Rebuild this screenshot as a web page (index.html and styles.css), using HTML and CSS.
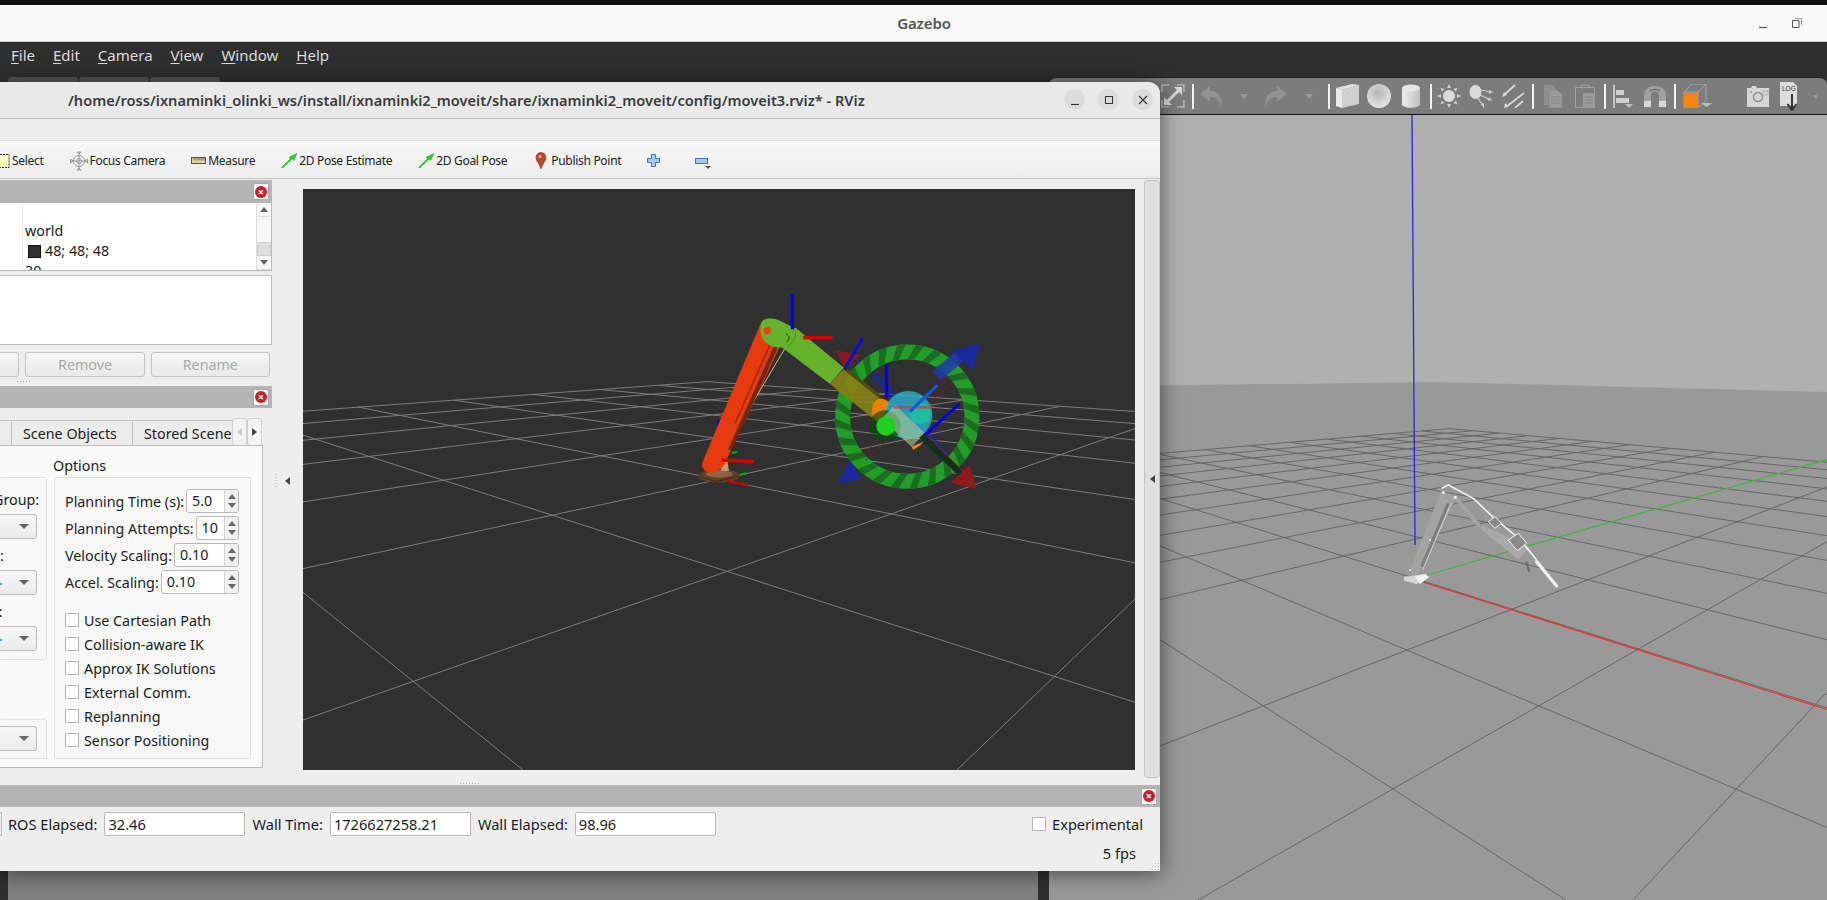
FILE: index.html
```html
<!DOCTYPE html>
<html lang="en">
<head>
<meta charset="utf-8">
<title>Gazebo and RViz</title>
<link rel="stylesheet" href="styles.css">
</head>
<body>
<div class="screen">
  <div class="topstrip"></div>
  <header class="gz-title">
    <span></span>
    <span class="gz-name">Gazebo</span>
    <div class="gz-ctrls">
      <svg width="12" height="12" viewBox="0 0 12 12"><path d="M2 10.500H10" stroke="#555" stroke-width="1.200"/></svg>
      <svg width="12" height="12" viewBox="0 0 12 12"><path d="M1.500 3.500H8V10.500H1.500Z" fill="none" stroke="#555"/><path d="M4 1.500H10.500V8" fill="none" stroke="#999"/></svg>
    </div>
  </header>
  <nav class="gz-menu">
    <span><u>F</u>ile</span><span><u>E</u>dit</span><span><u>C</u>amera</span><span><u>V</u>iew</span><span><u>W</u>indow</span><span><u>H</u>elp</span>
  </nav>
  <div class="gz-body">
    <aside class="gz-left">
      <div class="gz-tabs"><span class="gz-tab"></span><span class="gz-tab"></span><span class="gz-tab"></span></div>
      <div class="gz-left-panel"></div>
    </aside>
    <main class="gz-right">
      <div class="gz-toolbar">
        <span class="tb"><svg width="24" height="24" viewBox="0 0 24 24"><path d="M8 1H1V8M1 16V23H8M16 23H23V16M23 8V1H16" fill="none" stroke="#c9c9c9" stroke-width="1.200"/><path d="M6 18L18 6" stroke="#d8d8d8" stroke-width="3"/><path d="M13 3H21V11ZM3 13V21H11Z" fill="#d8d8d8"/></svg></span>
        <i class="sep"></i>
        <span class="tb"><svg width="24" height="24" viewBox="0 0 24 24"><path d="M1 10L11 2V7C19 7 24 13 22 23C20 16 17 13 11 13V18Z" fill="#929292"/></svg></span>
        <span class="tb tb-drop"><i class="drop"></i></span>
        <span class="tb"><svg width="24" height="24" viewBox="0 0 24 24"><path d="M23 10L13 2V7C5 7 0 13 2 23C4 16 7 13 13 13V18Z" fill="#929292"/></svg></span>
        <span class="tb tb-drop"><i class="drop"></i></span>
        <i class="sep"></i>
        <span class="tb"><svg width="24" height="24" viewBox="0 0 24 24"><path d="M1 4L7 6V24L1 22Z" fill="#ebebeb"/><path d="M7 6L24 1V20L7 24Z" fill="#cfcfcf"/><path d="M1 4L17 0L24 1L7 6Z" fill="#e2e2e2"/></svg></span>
        <span class="tb"><svg width="24" height="24" viewBox="0 0 24 24"><defs><radialGradient id="sph" cx=".45" cy=".35" r=".7"><stop offset="0" stop-color="#b6b6b6"/><stop offset=".6" stop-color="#d4d4d4"/><stop offset="1" stop-color="#e8e8e8"/></radialGradient></defs><ellipse cx="12" cy="12" rx="12" ry="12" fill="url(#sph)"/></svg></span>
        <span class="tb"><svg width="20" height="24" viewBox="0 0 20 24"><defs><linearGradient id="cyl"><stop offset="0" stop-color="#ececec"/><stop offset=".5" stop-color="#d8d8d8"/><stop offset="1" stop-color="#bdbdbd"/></linearGradient></defs><path d="M1 4V20C1 25 19 25 19 20V4Z" fill="url(#cyl)"/><ellipse cx="10" cy="4" rx="9" ry="3.500" fill="#e6e6e6"/></svg></span>
        <i class="sep"></i>
        <span class="tb"><svg width="24" height="24" viewBox="0 0 24 24"><circle cx="12" cy="12" r="6" fill="#dcdcdc"/><g fill="#cfcfcf"><path d="M12 0L14 4H10ZM12 24L10 20H14ZM0 12L4 10V14ZM24 12L20 14V10ZM3.500 3.500L7.500 5L5 7.500ZM20.500 20.500L16.500 19L19 16.500ZM20.500 3.500L19 7.500L16.500 5ZM3.500 20.500L5 16.500L7.500 19Z"/></g></svg></span>
        <span class="tb"><svg width="24" height="24" viewBox="0 0 24 24"><ellipse cx="6.500" cy="8" rx="6" ry="7" fill="#dadada"/><g stroke="#cfcfcf" stroke-width="1.200" fill="#cfcfcf"><path d="M12 6L21 8M11 11L20 15M9 14L14 22"/></g><path d="M24 8L20 10V6ZM23 17L18 16L20.500 13ZM15 24L12 20L15 19Z" fill="#cfcfcf"/></svg></span>
        <span class="tb"><svg width="24" height="24" viewBox="0 0 24 24"><g stroke="#d8d8d8" stroke-width="1.800"><path d="M14 1L3 11M23 9L5 23M22 17L14 24"/></g><path d="M1 13L3 8L6 11ZM3 24L4 19L8 22Z" fill="#d8d8d8"/></svg></span>
        <i class="sep"></i>
        <span class="tb tb-copy"><svg width="20" height="24" viewBox="0 0 20 24"><path d="M1 1H9L13 5V21H1Z" fill="#8f8f8f"/><path d="M6 6H14L19 10V24H6Z" fill="#9b9b9b" stroke="#868686" stroke-width=".6"/><path d="M8 13H17M8 16H17M8 19H17" stroke="#858585"/></svg></span>
        <span class="tb"><svg width="22" height="24" viewBox="0 0 22 24"><path d="M1.500 3.500H20.500V23.500H1.500Z" fill="none" stroke="#a2a2a2"/><path d="M7 3V1H15V3" fill="none" stroke="#a2a2a2"/><path d="M9 9H21V24H9Z" fill="#9b9b9b"/><path d="M11 13H19M11 16H19M11 19H19" stroke="#858585"/></svg></span>
        <i class="sep"></i>
        <span class="tb"><svg width="20" height="24" viewBox="0 0 20 24"><path d="M1 1V24" stroke="#d8d8d8" stroke-width="1.600"/><path d="M3 6H11V11H3ZM3 14H16V19H3Z" fill="#d0d0d0"/><path d="M12 20H20L16 24Z" fill="#bdbdbd"/></svg></span>
        <span class="tb"><svg width="24" height="24" viewBox="0 0 24 24"><path d="M1 23V11C1 -1 23 -1 23 11V23H16V11C16 6 8 6 8 11V23Z" fill="#a0a0a0"/><path d="M1 23V17H8V23ZM16 23V17H23V23Z" fill="#d8d8d8"/><path d="M7 7C9 5 15 5 17 7" stroke="#444" fill="none" stroke-width=".8"/></svg></span>
        <i class="sep"></i>
        <span class="tb tb-cube"><svg width="30" height="24" viewBox="0 0 30 24"><path d="M1 8H15V24H1ZM1 8L9 0H23L15 8M23 0V16L15 24" fill="none" stroke="#a6a6a6"/><rect x="1" y="9" width="14" height="15" fill="#f5850f"/><path d="M19 19H30L24.500 23Z" fill="#bdbdbd" transform="translate(-1 0)"/></svg></span>
        <span class="tb tb-cam"><svg width="24" height="24" viewBox="0 0 24 24"><path d="M1 4H5L6 2H10L11 4H23V23H1Z" fill="#d6d6d6"/><circle cx="12" cy="13" r="4.500" fill="none" stroke="#8c8c8c" stroke-width="1.400"/><path d="M17 7H22V11H17Z" fill="none" stroke="#b5b5b5"/><circle cx="5" cy="8" r="1" fill="#999"/></svg></span>
        <span class="tb"><svg width="22" height="30" viewBox="0 0 22 30"><path d="M1 1H14L18 5V25H1Z" fill="#dcdcdc"/><text x="3" y="10" class="log-text">LOG</text><path d="M13 13V27M8.500 23L13 29L17.500 23" fill="none" stroke="#333" stroke-width="2"/></svg></span>
        <i class="tb-dot"></i>
      </div>
      <svg class="gz-view" width="778" height="785" viewBox="1049 115 778 785">
        <rect x="1049" y="115" width="778" height="785" fill="#b0b0b0"/>
        <path d="M1049 387L1434 382L1827 392V900H1049Z" fill="#999"/>
        <g class="gz-grid">
          <line x1="903" y1="475" x2="1566" y2="900"/><line x1="978" y1="469" x2="1827" y2="827.500"/><line x1="1044" y1="462" x2="1827" y2="708"/><line x1="1103" y1="458.300" x2="1827" y2="639.700"/><line x1="1157" y1="453.800" x2="1827" y2="593.300"/><line x1="1206" y1="449.600" x2="1827" y2="560.400"/><line x1="1250" y1="445.800" x2="1827" y2="535.700"/><line x1="1290" y1="442.300" x2="1827" y2="516.600"/><line x1="1327" y1="439.100" x2="1827" y2="501.300"/><line x1="1361" y1="436.200" x2="1827" y2="488.800"/><line x1="1393" y1="433.500" x2="1827" y2="478.500"/><line x1="1422" y1="431" x2="1827" y2="469.700"/><line x1="1449" y1="428.600" x2="1827" y2="462.200"/>
          <line x1="1827" y1="692" x2="1633" y2="900"/><line x1="1827" y1="541.600" x2="1198" y2="900"/><line x1="1827" y1="486.900" x2="1049" y2="789"/><line x1="1763" y1="456.600" x2="1049" y2="626"/><line x1="1714" y1="452.300" x2="1049" y2="584.300"/><line x1="1670" y1="448.300" x2="1049" y2="554.300"/><line x1="1629" y1="444.700" x2="1049" y2="531.700"/><line x1="1592" y1="441.500" x2="1049" y2="514"/><line x1="1558" y1="438.500" x2="1049" y2="499.800"/><line x1="1527" y1="435.800" x2="1049" y2="488.100"/><line x1="1499" y1="433.200" x2="1049" y2="478.400"/><line x1="1473" y1="430.800" x2="1049" y2="470.100"/><line x1="1449" y1="428.600" x2="1049" y2="463"/>
        </g>
        <line x1="1412" y1="115" x2="1415" y2="545" stroke="#2626e0" stroke-width="1.300"/>
        <line x1="1427" y1="575" x2="1827" y2="459.600" stroke="#3fb53f" stroke-width="1.200"/>
        <line x1="1423" y1="582" x2="1827" y2="709.600" stroke="#ff2222" stroke-width="1.100"/>
        <g transform="translate(1380 460) scale(.3333)">
          <path d="M88 335L185 90L228 115L112 348Z" fill="#a3a3a3"/>
          <path d="M205 130L125 320" stroke="#7d7d7d" stroke-width="9"/>
          <path d="M214 128L128 330" stroke="#cfcfcf" stroke-width="3"/>
          <path d="M305 195L450 262L415 298L305 210Z" fill="#a9a9a9"/>
          <path d="M228 115L300 200" stroke="#a3a3a3" stroke-width="12"/>
          <path d="M185 85L205 75L280 115L340 172L420 238L470 300" fill="none" stroke="#f0f0f0" stroke-width="5"/>
          <path d="M325 185L345 170L365 190L345 205ZM385 240L415 220L440 250L412 272Z" fill="#8a8a8a" stroke="#f0f0f0" stroke-width="3"/>
          <path d="M470 305L530 378" stroke="#f0f0f0" stroke-width="10" stroke-linecap="round"/>
          <path d="M438 305L448 335" stroke="#666" stroke-width="6"/>
          <path d="M72 350L135 342L147 352L110 372L72 362Z" fill="#d4d4d4"/>
          <path d="M105 350L135 342L147 352L120 372Z" fill="#f2f2f2"/>
          <circle cx="226" cy="112" r="5" fill="#eee"/><circle cx="190" cy="98" r="4" fill="#eee"/><circle cx="150" cy="240" r="3" fill="#eee"/><circle cx="90" cy="330" r="3" fill="#eee"/>
        </g>
      </svg>
    </main>
  </div>

  <section class="rviz">
    <header class="rv-title">
      <span class="rv-name">/home/ross/ixnaminki_olinki_ws/install/ixnaminki2_moveit/share/ixnaminki2_moveit/config/moveit3.rviz* - RViz</span>
      <div class="rv-ctrls">
        <span class="rv-ctrl"><svg width="12" height="12" viewBox="0 0 12 12"><path d="M2 10.500H10" stroke="#333" stroke-width="1.200"/></svg></span>
        <span class="rv-ctrl"><svg width="12" height="12" viewBox="0 0 12 12"><rect x="2.500" y="2.500" width="7" height="7" fill="none" stroke="#333"/></svg></span>
        <span class="rv-ctrl"><svg width="12" height="12" viewBox="0 0 12 12"><path d="M2 2L10 10M10 2L2 10" stroke="#333" stroke-width="1.100"/></svg></span>
      </div>
    </header>
    <div class="rv-menu"></div>
    <div class="rv-tools">
      <span class="tool tool-select"><svg width="10" height="14" viewBox="0 0 10 14"><rect x="-6" y=".5" width="15" height="13" fill="#ffffc4" stroke="#333" stroke-dasharray="2 1"/></svg>Select</span>
      <span class="tool"><svg width="18" height="20" viewBox="0 0 18 20"><g fill="none" stroke="#9a9a9a"><circle cx="9" cy="10" r="5.500"/><path d="M9 1V19M0.500 10H17.500M3 10L0.500 8V12ZM15 10L17.500 8V12ZM9 3L7 1H11ZM9 17L7 19H11Z"/><circle cx="9" cy="10" r="2.500"/></g></svg>Focus Camera</span>
      <span class="tool"><svg width="15" height="7" viewBox="0 0 15 7"><rect x=".5" y=".5" width="14" height="6" fill="#e0d4a8" stroke="#555"/><path d="M3 1V3.500M5 1V3.500M7 1V3.500M9 1V3.500M11 1V3.500M13 1V3.500" stroke="#7c6b3c"/></svg>Measure</span>
      <span class="tool tool-arrow"><svg width="16" height="15" viewBox="0 0 16 15"><path d="M0.500 14.500L9.500 5.500L8 4.200L16 .5L12.800 7.500L11.200 6L1.800 15Z" fill="#14e014" stroke="#0a600a" stroke-width=".3"/></svg>2D Pose Estimate</span>
      <span class="tool tool-arrow"><svg width="16" height="15" viewBox="0 0 16 15"><path d="M0.500 14.500L9.500 5.500L8 4.200L16 .5L12.800 7.500L11.200 6L1.800 15Z" fill="#14e014" stroke="#0a600a" stroke-width=".3"/></svg>2D Goal Pose</span>
      <span class="tool tool-pin"><svg width="12" height="17" viewBox="0 0 12 17"><path d="M6 17C4 11 1 9 1 5.500C1 2.500 3 .5 6 .5C9 .5 11 2.500 11 5.500C11 9 8 11 6 17Z" fill="#b6492c" stroke="#7c3a20" stroke-width=".5"/><circle cx="5" cy="4.500" r="1.500" fill="#e9a98c"/></svg>Publish Point</span>
      <span class="tool tool-plus"><svg width="13" height="13" viewBox="0 0 13 13"><path d="M4.500 .5H8.500V4.500H12.500V8.500H8.500V12.500H4.500V8.500H.5V4.500H4.500Z" fill="#a9c8ea" stroke="#3f74b5"/></svg></span>
      <span class="tool tool-minus"><svg width="13" height="6" viewBox="0 0 13 6"><rect x=".5" y=".5" width="12" height="5" fill="#a9c8ea" stroke="#3f74b5"/></svg><i class="drop drop-small"></i></span>
    </div>

    <div class="rv-main">
      <div class="dock">
        <div class="dock-head"><span class="close"><i>×</i></span></div>
        <div class="tree">
          <div class="tree-rows">
            <div class="tree-row"></div>
            <div class="tree-row">world</div>
            <div class="tree-row"><i class="swatch"></i>48; 48; 48</div>
            <div class="tree-row">30</div>
          </div>
          <div class="vscroll">
            <span class="vs-btn"><i class="arrow-up"></i></span>
            <span class="vs-track"><i class="vs-thumb"></i></span>
            <span class="vs-btn"><i class="arrow-down"></i></span>
          </div>
        </div>
        <div class="views-box"></div>
        <div class="view-btns">
          <span class="btn btn-clip"></span>
          <span class="btn">Remove</span>
          <span class="btn">Rename</span>
        </div>
        <div class="dots dots-dock"></div>
        <div class="dock-head dock-head-2"><span class="close"><i>×</i></span></div>
        <div class="tabs">
          <span class="tab tab-clip"></span>
          <span class="tab tab-scene">Scene Objects</span>
          <span class="tab tab-stored"><span>Stored Scenes</span></span>
          <span class="tab-scroll"><i class="arrow-left faint"></i></span>
          <span class="tab-scroll"><i class="arrow-right"></i></span>
        </div>
        <div class="pane">
          <div class="pane-left">
            <div class="group group-a">
              <div class="clip-label">Planning Group:</div>
              <div class="combo"><i class="arrow-down"></i></div>
              <div class="clip-label">Start State:</div>
              <div class="combo"><b class="blue-tick"></b><i class="arrow-down"></i></div>
              <div class="clip-label">Goal State:</div>
              <div class="combo"><b class="blue-tick"></b><i class="arrow-down"></i></div>
            </div>
            <div class="group group-b">
              <div class="combo"><i class="arrow-down"></i></div>
            </div>
          </div>
          <div class="pane-right">
            <div class="options-title">Options</div>
            <div class="group group-opts">
              <div class="spin-row"><span>Planning Time (s):</span><span class="spin"><span class="spin-val">5.0</span><span class="spin-btns"><i class="arrow-up"></i><i class="arrow-down"></i></span></span></div>
              <div class="spin-row"><span>Planning Attempts:</span><span class="spin"><span class="spin-val">10</span><span class="spin-btns"><i class="arrow-up"></i><i class="arrow-down"></i></span></span></div>
              <div class="spin-row"><span>Velocity Scaling:</span><span class="spin"><span class="spin-val">0.10</span><span class="spin-btns"><i class="arrow-up"></i><i class="arrow-down"></i></span></span></div>
              <div class="spin-row"><span>Accel. Scaling:</span><span class="spin"><span class="spin-val">0.10</span><span class="spin-btns"><i class="arrow-up"></i><i class="arrow-down"></i></span></span></div>
              <div class="checks">
                <div class="check"><i class="box"></i>Use Cartesian Path</div>
                <div class="check"><i class="box"></i>Collision-aware IK</div>
                <div class="check"><i class="box"></i>Approx IK Solutions</div>
                <div class="check"><i class="box"></i>External Comm.</div>
                <div class="check"><i class="box"></i>Replanning</div>
                <div class="check"><i class="box"></i>Sensor Positioning</div>
              </div>
            </div>
          </div>
        </div>
      </div>
      <div class="collapse"><i class="dots-v"></i><i class="arrow-left"></i></div>
      <svg class="scene" width="832" height="581" viewBox="303 189 832 581">
        <rect x="303" y="189" width="832" height="581" fill="#303030"/>
        <g class="rv-grid">
          <line x1="97" y1="426" x2="523" y2="770"/><line x1="242" y1="415.600" x2="1135" y2="702.300"/><line x1="358" y1="407" x2="1135" y2="562.800"/><line x1="454" y1="400.200" x2="1135" y2="499.500"/><line x1="532" y1="394.300" x2="1135" y2="463.300"/><line x1="600" y1="389.500" x2="1135" y2="440"/><line x1="658" y1="385.400" x2="1135" y2="423.600"/><line x1="707" y1="381.700" x2="1135" y2="411.500"/>
          <line x1="1135" y1="599" x2="957" y2="770"/><line x1="1135" y1="428.500" x2="303" y2="720"/><line x1="1060" y1="406.300" x2="303" y2="568.600"/><line x1="965" y1="399.700" x2="303" y2="501.900"/><line x1="885" y1="394.100" x2="303" y2="464.400"/><line x1="816" y1="389.400" x2="303" y2="440.300"/><line x1="758" y1="385.300" x2="303" y2="423.500"/><line x1="707" y1="381.700" x2="303" y2="411.200"/>
        </g>
        <g transform="translate(680 290) scale(.3333)">
          <path d="M115 388V405" stroke="#0000d8" stroke-width="7"/>
          <ellipse cx="118" cy="558" rx="62" ry="20" fill="#5f3f28"/>
          <ellipse cx="118" cy="552" rx="40" ry="11" fill="#8f6440"/>
          <path d="M60 560L110 575L178 558" fill="none" stroke="#3d2a1a" stroke-width="3"/>
          <path d="M125 515H143L147 543H122Z" fill="#c49a64"/>
          <path d="M118 510L125 545" stroke="#d040d0" stroke-width="2"/>
          <circle class="ring-base" cx="682" cy="380" r="194"/>
          <g class="ring-stripes">
            <path id="st" d="M854 380L852.900 399.500L893 430.600L897.400 406.500Z"/>
            <use href="#st" transform="rotate(15 682 380)"/><use href="#st" transform="rotate(30 682 380)"/><use href="#st" transform="rotate(45 682 380)"/><use href="#st" transform="rotate(60 682 380)"/><use href="#st" transform="rotate(75 682 380)"/><use href="#st" transform="rotate(90 682 380)"/><use href="#st" transform="rotate(105 682 380)"/><use href="#st" transform="rotate(120 682 380)"/><use href="#st" transform="rotate(135 682 380)"/><use href="#st" transform="rotate(150 682 380)"/><use href="#st" transform="rotate(165 682 380)"/><use href="#st" transform="rotate(180 682 380)"/><use href="#st" transform="rotate(195 682 380)"/><use href="#st" transform="rotate(210 682 380)"/><use href="#st" transform="rotate(225 682 380)"/><use href="#st" transform="rotate(240 682 380)"/><use href="#st" transform="rotate(255 682 380)"/><use href="#st" transform="rotate(270 682 380)"/><use href="#st" transform="rotate(285 682 380)"/><use href="#st" transform="rotate(300 682 380)"/><use href="#st" transform="rotate(315 682 380)"/><use href="#st" transform="rotate(330 682 380)"/><use href="#st" transform="rotate(345 682 380)"/>
          </g>
          <path d="M315 175L198 372" stroke="#c8c468" stroke-width="3"/>
          <path d="M240 105L68 515C62 535 75 548 92 548C110 548 125 535 132 525L302 165L262 85Z" fill="#e63a10"/>
          <path d="M288 170L150 480" stroke="#6e2a10" stroke-width="12"/>
          <path d="M270 165L165 400" stroke="#a52c0c" stroke-width="5"/>
          <path d="M250 90C265 82 285 85 300 92L345 115L490 235L450 282L305 172C285 175 262 165 250 150C238 130 238 100 250 90Z" fill="#64b32a"/>
          <path d="M345 115L490 235" stroke="#7ba83c" stroke-width="5"/>
          <path d="M345 118C350 140 340 160 322 170" fill="none" stroke="#2f6e12" stroke-width="1.500"/>
          <path d="M318 132C330 138 330 148 320 155" fill="none" stroke="#1d3a0c" stroke-width="3"/>
          <circle cx="262" cy="122" r="11" fill="#e9420f"/>
          <path d="M337 12V118" stroke="#0000ee" stroke-width="10"/>
          <path d="M370 143H458" stroke="#dd0000" stroke-width="11"/>
          <path d="M490 238L450 282L600 402L625 345Z" fill="#8a8216" opacity=".9"/>
          <path d="M500 240L600 320" stroke="#4e4e14" stroke-width="10"/>
          <path d="M465 180L540 195L495 235Z" fill="#8a1a1a"/>
          <path d="M548 145L495 235" stroke="#0a0ae0" stroke-width="9"/>
          <path d="M580 250L800 500" stroke="#1a2a9a" stroke-width="22" opacity=".7"/>
          <path d="M540 500L805 262M555 512L820 274" stroke="#9a1414" stroke-width="2.500"/>
          <path d="M770 258L850 188" stroke="#1e3cb0" stroke-width="38" opacity=".8"/>
          <path d="M815 182L898 160L880 240Z" fill="#1a2a9c"/>
          <path d="M510 510L472 580L545 568Z" fill="#1a2a9c"/>
          <path d="M578 345C590 320 615 322 628 340L600 402L575 370Z" fill="#ee8000"/>
          <circle cx="685" cy="375" r="72" fill="#27b8cc" opacity=".78"/>
          <circle cx="720" cy="370" r="32" fill="#16d89a" opacity=".55"/>
          <circle cx="615" cy="408" r="47" fill="#0c4a0c" opacity=".65"/>
          <path d="M625 365L715 450" stroke="#a8cc98" stroke-width="58" opacity=".6"/>
          <circle cx="618" cy="408" r="29" fill="#1fd01f"/>
          <path d="M640 352H760" stroke="#d83030" stroke-width="9" opacity=".6"/>
          <path d="M620 220V325" stroke="#0000ee" stroke-width="10"/>
          <path d="M772 285L690 365" stroke="#0a5ae8" stroke-width="9"/>
          <path d="M838 342L735 435" stroke="#0000ee" stroke-width="9"/>
          <path d="M695 470L730 455L722 465L700 480Z" fill="#f08a10"/>
          <path d="M725 437L848 555" stroke="#14301c" stroke-width="20"/>
          <path d="M745 440L850 545" stroke="#e01818" stroke-width="2"/>
          <path d="M868 525L890 598L812 578Z" fill="#8f1a1a"/>
          <path d="M125 510L222 515" stroke="#e00000" stroke-width="9"/>
          <path d="M155 490L172 485M178 555L198 550" stroke="#00b000" stroke-width="6"/>
          <path d="M140 572L205 587" stroke="#d00000" stroke-width="7"/>
        </g>
      </svg>
      <div class="right-handle"><i class="arrow-left"></i></div>
    </div>
    <div class="dots dots-status"></div>
    <div class="status-head"><span class="close"><i>×</i></span></div>
    <div class="status">
      <div class="status-row">
        <span class="field field-clip"></span>
        <span class="status-label">ROS Elapsed:</span>
        <span class="field">32.46</span>
        <span class="status-label">Wall Time:</span>
        <span class="field">1726627258.21</span>
        <span class="status-label">Wall Elapsed:</span>
        <span class="field">98.96</span>
        <span class="status-spacer"></span>
        <i class="box"></i>
        <span class="status-exp">Experimental</span>
      </div>
      <div class="fps-row"><span>5 fps</span><svg class="grip" width="12" height="12" viewBox="0 0 12 12"><g fill="#bdbdbd"><rect x="10" y="0" width="1" height="1"/><rect x="7" y="3" width="1" height="1"/><rect x="10" y="3" width="1" height="1"/><rect x="4" y="6" width="1" height="1"/><rect x="7" y="6" width="1" height="1"/><rect x="10" y="6" width="1" height="1"/><rect x="1" y="9" width="1" height="1"/><rect x="4" y="9" width="1" height="1"/><rect x="7" y="9" width="1" height="1"/><rect x="10" y="9" width="1" height="1"/></g></svg></div>
    </div>
  </section>
</div>
</body>
</html>
```
FILE: styles.css
```css
* { box-sizing: border-box; }
html, body { margin: 0; padding: 0; }
body { width: 1827px; height: 900px; overflow: hidden; background: #2f2f2f; font-family: "Noto Sans", "Open Sans", sans-serif; color: #1c1c1c; }
i { display: block; font-style: normal; }
svg { display: block; flex: none; }

.screen { position: relative; width: 1827px; height: 900px; overflow: hidden; display: flex; flex-direction: column; }
.topstrip { height: 5px; background: #111; flex: none; }

.gz-title { height: 37px; flex: none; background: #fafafa; border-bottom: 1px solid #cfcfcf; display: grid; grid-template-columns: 1fr auto 1fr; align-items: center; }
.gz-name { font-size: 15px; font-weight: 600; color: #555; letter-spacing: -.1px; margin-left: 21px; }
.gz-ctrls { display: flex; gap: 22px; justify-content: flex-end; padding-right: 24px; }

.gz-menu { height: 35px; flex: none; background: #2f2f2f; color: #dcdcdc; font-size: 15px; display: flex; align-items: center; gap: 18px; padding: 0 0 9px 11px; }
.gz-menu u { text-underline-offset: 2px; }

.gz-body { flex: 1; display: flex; gap: 11px; min-height: 0; background: #2f2f2f; }
.gz-left { width: 1038px; flex: none; display: flex; flex-direction: column; padding-left: 8px; }
.gz-tabs { height: 5px; display: flex; gap: 1px; flex: none; }
.gz-tab { width: 70px; background: #555; border-radius: 3px 3px 0 0; }
.gz-left-panel { flex: 1; background: #808080; }
.gz-right { flex: 1; display: flex; flex-direction: column; min-width: 0; }
.gz-toolbar { height: 38px; flex: none; display: flex; align-items: center; padding-left: 108px; background: #7c7c7c; border-bottom: 1px solid #111; border-top: 1px solid #222; border-radius: 7px 7px 0 0; }
.tb { width: 32px; height: 28px; flex: none; display: flex; align-items: center; justify-content: center; }
.tb-drop { width: 33px; }
.tb-copy { margin-left: 2px; }
.tb-cube { margin-left: 5px; }
.tb-cam { margin-left: 28px; }
.tb-dot { width: 3px; height: 3px; background: #9a9a9a; margin-left: 8px; }
.sep { width: 2px; height: 25px; background: #f2f2f2; margin: 0 1px 0 3px; flex: none; }
.drop { width: 0; height: 0; border-left: 4px solid transparent; border-right: 4px solid transparent; border-top: 5px solid #9b9b9b; }
.log-text { font-family: "Liberation Sans", sans-serif; font-size: 6.500px; fill: #333; }
.gz-view { flex: 1; }
.gz-grid line { stroke: #676767; stroke-width: 1; }

.rviz { position: absolute; left: 0; top: 82px; width: 1160px; height: 789px; display: flex; flex-direction: column; background: #eeeeee; border-radius: 0 12px 0 0; box-shadow: 0 2px 22px rgba(0, 0, 0, .55); }
.rv-title { height: 37px; flex: none; position: relative; display: flex; align-items: center; background: #e9e9e9; border-bottom: 1px solid #bfbfbf; border-radius: 0 12px 0 0; padding-left: 68px; }
.rv-name { font-size: 14.600px; font-weight: 600; color: #3c3c3c; white-space: nowrap; }
.rv-ctrls { position: absolute; right: 7px; top: 7px; display: flex; gap: 13px; }
.rv-ctrl { width: 21px; height: 21px; border-radius: 50%; background: #dcdcdc; display: flex; align-items: center; justify-content: center; }
.rv-menu { height: 22px; flex: none; background: #ededed; border-bottom: 1px solid #dcdcdc; }
.rv-tools { height: 38px; flex: none; display: flex; align-items: center; gap: 26px; padding-top: 2px; background: linear-gradient(#f7f7f7, #ededed); border-bottom: 1px solid #c4c4c4; font-size: 12px; letter-spacing: -.3px; color: #222; }
.tool { display: flex; align-items: center; gap: 2px; white-space: nowrap; }
.tool-select { margin-right: 0; }
.tool-arrow { gap: 2px; }
.tool-pin { gap: 4px; margin-left: 2px; }
.tool-plus { margin-left: 0; }
.tool-minus { position: relative; margin-left: 9px; }
.drop-small { position: absolute; left: 10px; top: 8px; border-left-width: 3px; border-right-width: 3px; border-top: 3px solid #555; }

.rv-main { height: 603px; flex: none; display: flex; align-items: flex-start; background: #eeeeee; }
.dock { width: 272px; flex: none; height: 590px; display: flex; flex-direction: column; padding-top: 1px; }
.dock-head { height: 23px; flex: none; background: #b5b5b5; display: flex; justify-content: flex-end; align-items: center; padding-right: 3px; }
.dock-head-2 { height: 22px; }
.close { width: 16px; height: 17px; background: #f8f8f8; border: 1px solid #a9a9a9; border-radius: 2px; display: flex; align-items: center; justify-content: center; }
.close i { width: 12px; height: 12px; border-radius: 50%; background: #c8202c; color: #fff; font-size: 11px; line-height: 11px; text-align: center; font-weight: 700; }

.tree { height: 68px; flex: none; display: flex; background: #fff; border-bottom: 1px solid #b8b8b8; overflow: hidden; }
.tree-rows { flex: 1; padding-left: 25px; border-right: 1px solid #ddd; background: linear-gradient(90deg, #fff 22px, #ececec 22px, #ececec 23px, #fff 23px); font-size: 14.300px; overflow: hidden; }
.tree-row { height: 20px; line-height: 20px; display: flex; align-items: center; white-space: nowrap; }
.tree-row:first-child { height: 18px; }
.swatch { width: 13px; height: 13px; background: #303030; border: 1px solid #111; margin: 0 4px 0 3px; }
.vscroll { width: 15px; flex: none; display: flex; flex-direction: column; background: #f7f7f7; border-right: 1px solid #bbb; }
.vs-btn { height: 14px; display: flex; align-items: center; justify-content: center; flex: none; border-bottom: 1px solid #e0e0e0; }
.vs-track { flex: 1; display: flex; flex-direction: column; justify-content: flex-end; }
.vs-thumb { height: 14px; background: #dedede; border: 1px solid #d0d0d0; }
.views-box { height: 70px; flex: none; margin-top: 4px; background: #fff; border: 1px solid #bcbcbc; border-left: 0; }
.view-btns { display: flex; gap: 6px; flex: none; margin: 7px 2px 0 -100px; height: 25px; }
.btn { flex: 1; border: 1px solid #c4c4c4; border-radius: 3px; background: linear-gradient(#f6f6f6, #e9e9e9); color: #a8a8a8; font-size: 14.300px; display: flex; align-items: center; justify-content: center; }
.dots { height: 9px; flex: none; background: radial-gradient(circle, #aaa .6px, transparent .8px) 0 center / 3px 3px repeat-x; }
.dots-dock { width: 16px; margin-left: 16px; }
.tabs { height: 37px; flex: none; display: flex; align-items: flex-end; position: relative; }
.tab { height: 25px; flex: none; display: flex; align-items: center; font-size: 14.300px; background: #ececec; border: 1px solid #c2c2c2; border-bottom: 0; border-left: 0; white-space: nowrap; overflow: hidden; }
.tab-clip { width: 12px; }
.tab-scene { width: 121px; padding-left: 11px; }
.tab-stored { width: 99px; padding-left: 11px; border-right: 0; }
.tab-scroll { width: 15px; height: 28px; flex: none; display: flex; align-items: center; justify-content: center; background: #f3f3f3; border: 1px solid #cfcfcf; border-radius: 3px; margin-bottom: -1px; }
.pane { flex: none; height: 323px; width: 263px; display: flex; background: #fafafa; border: 1px solid #bdbdbd; border-left: 0; padding-top: 31px; gap: 7px; font-size: 14.300px; position: relative; }
.pane-left { width: 47px; flex: none; display: flex; flex-direction: column; }
.group { background: #f8f8f8; border: 1px solid #e0e0e0; border-radius: 2px; }
.group-a { height: 183px; border-left: 0; padding: 8px 9px 0 0; }
.group-b { height: 40px; margin-top: 59px; border-left: 0; padding: 6px 9px 0 0; }
.clip-label { height: 28px; line-height: 28px; margin-left: -70px; white-space: nowrap; }
.clip-label:not(:first-child) { margin-top: 3px; }
.combo { height: 25px; position: relative; background: linear-gradient(#f7f7f7, #ebebeb); border: 1px solid #bdbdbd; border-left: 0; border-radius: 0 3px 3px 0; display: flex; align-items: center; justify-content: flex-end; padding-right: 7px; }
.blue-tick { position: absolute; left: 0; top: 12px; width: 2px; height: 2px; background: #3daee9; }
.pane-right { width: 197px; flex: none; position: relative; }
.options-title { position: absolute; left: -1px; top: -13px; line-height: 20px; transform: translateY(-8px); }
.group-opts { height: 282px; padding: 11px 11px 0 10px; }
.spin-row { display: flex; align-items: center; height: 24px; margin-bottom: 3px; gap: 2px; white-space: nowrap; }
.spin { flex: 1; height: 24px; display: flex; background: #fff; border: 1px solid #b9b9b9; border-radius: 3px; }
.spin-val { flex: 1; padding-left: 5px; line-height: 22px; }
.spin-btns { width: 14px; flex: none; display: flex; flex-direction: column; justify-content: center; align-items: center; gap: 4px; background: #f1f1f1; border-left: 1px solid #d5d5d5; border-radius: 0 3px 3px 0; }
.checks { margin-top: 14px; }
.check { height: 24px; display: flex; align-items: center; gap: 5px; white-space: nowrap; }
.box { width: 14px; height: 14px; flex: none; background: #fff; border: 1px solid #b5b5b5; border-radius: 1px; }

.arrow-up, .arrow-down { width: 0; height: 0; border-left: 5px solid transparent; border-right: 5px solid transparent; }
.arrow-up { border-bottom: 5px solid #666; }
.arrow-down { border-top: 5px solid #666; }
.vs-btn .arrow-up, .vs-btn .arrow-down, .spin-btns .arrow-up, .spin-btns .arrow-down { border-left-width: 4px; border-right-width: 4px; }
.arrow-left, .arrow-right { width: 0; height: 0; border-top: 4px solid transparent; border-bottom: 4px solid transparent; }
.arrow-left { border-right: 5px solid #444; }
.arrow-right { border-left: 5px solid #444; }
.faint { border-right-color: #c8c8c8; }

.collapse { width: 31px; flex: none; height: 600px; display: flex; align-items: center; padding-top: 3px; gap: 8px; padding-left: 3px; }
.dots-v { width: 2px; height: 16px; background: radial-gradient(circle, #aaa .6px, transparent .8px) center 0 / 3px 3px repeat-y; }
.scene { margin-top: 10px; }
.right-handle { width: 16px; height: 598px; margin: 1px 0 0 9px; flex: none; background: #dfdfdf; border: 1px solid #c2c2c2; border-radius: 3px; display: flex; align-items: center; justify-content: center; }

.dots-status { width: 20px; height: 3px; margin: 0 0 0 459px; }
.status-head { height: 22px; margin-top: 0; flex: none; background: #b5b5b5; display: flex; justify-content: flex-end; align-items: center; padding-right: 3px; }
.status { flex: 1; min-height: 0; display: flex; flex-direction: column; background: #eeeeee; font-size: 14.600px; position: relative; }
.status-row { display: flex; align-items: center; height: 24px; margin-top: 5px; gap: 7px; padding-right: 17px; }
.field { width: 141px; height: 24px; flex: none; background: #fff; border: 1px solid #b9b9b9; border-radius: 2px; padding-left: 3px; line-height: 22px; }
.field-clip { width: 2px; padding: 0; border-left: 0; margin-right: -1px; background: #eee; }
.status-label { white-space: nowrap; }
.status-spacer { flex: 1; }
.status-exp { margin-left: -1px; }
.fps-row { display: flex; justify-content: flex-end; padding: 7px 24px 0 0; line-height: 20px; position: relative; }
.grip { position: absolute; right: 0; bottom: -9px; }

.rv-grid line { stroke: #7d7d7d; stroke-width: 1; }
.ring-base { fill: none; stroke: #22a428; stroke-width: 45; opacity: .95; }
.ring-stripes { fill: #1b6b20; }
```
